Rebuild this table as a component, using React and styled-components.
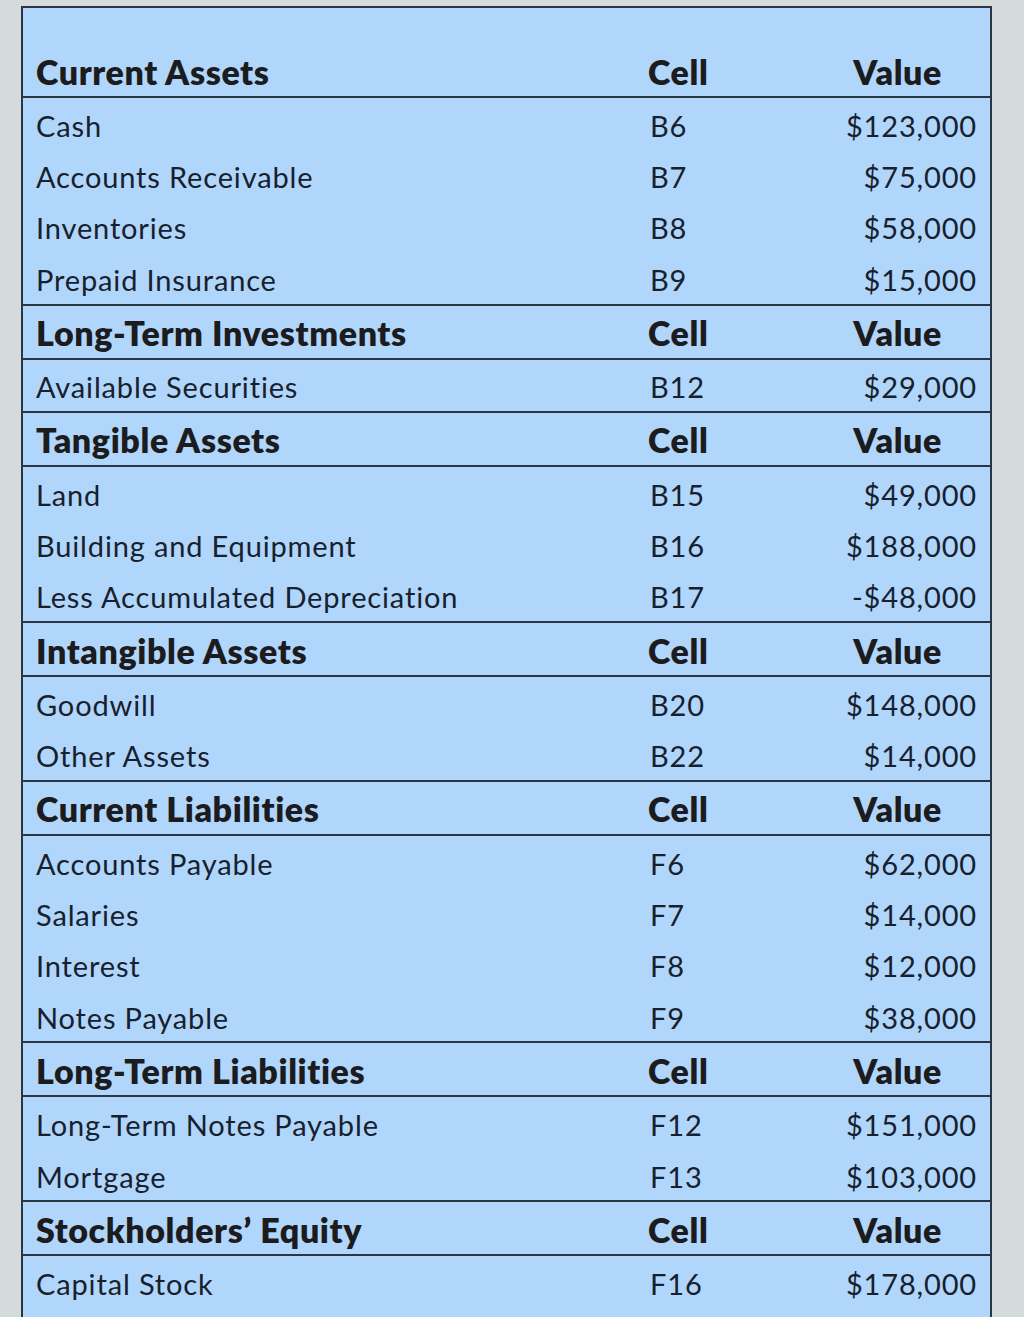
import React from "react";
import styled, { createGlobalStyle } from "styled-components";

const GlobalStyle = createGlobalStyle`
  html, body {
    margin: 0;
    padding: 0;
    background: #d5dbdb;
  }
  body {
    font-family: Lato, "Liberation Sans", sans-serif;
  }
  * {
    box-sizing: border-box;
  }
`;

const Page = styled.div`
  padding: 6px 0 0 21px;
  height: 1317px;
  overflow: hidden;
`;

const Sheet = styled.div`
  width: 971px;
  min-height: 1400px;
  background: #b1d6fb;
  border: 2px solid #2a3644;
  border-bottom: none;
`;

const HeadRow = styled.div`
  display: grid;
  grid-template-columns: 612px 1fr auto;
  align-items: center;
  padding: ${(p) => (p.$first ? "38px" : "2px")} 48px 0 13px;
  height: ${(p) => (p.$first ? "90px" : "56px")};
  border-top: ${(p) => (p.$first ? "none" : "2px solid #2a3644")};
  border-bottom: 2px solid #2a3644;
  color: #1c1c1e;
  font-size: 34px;
  font-weight: 800;
  letter-spacing: 0.6px;
`;

const Row = styled.div`
  display: grid;
  grid-template-columns: 612px 1fr auto;
  align-items: center;
  padding: 3px 13px 0 13px;
  height: 51.4px;
  color: #17212d;
  font-size: 29px;
  font-weight: 400;
  letter-spacing: 0.85px;
`;

const Label = styled.span`
  white-space: nowrap;
`;

const Cell = styled.span`
  padding-left: 2px;
`;

const Value = styled.span`
  text-align: right;
`;

const sections = [
  {
    title: "Current Assets",
    rows: [
      ["Cash", "B6", "$123,000"],
      ["Accounts Receivable", "B7", "$75,000"],
      ["Inventories", "B8", "$58,000"],
      ["Prepaid Insurance", "B9", "$15,000"],
    ],
  },
  {
    title: "Long-Term Investments",
    rows: [["Available Securities", "B12", "$29,000"]],
  },
  {
    title: "Tangible Assets",
    rows: [
      ["Land", "B15", "$49,000"],
      ["Building and Equipment", "B16", "$188,000"],
      ["Less Accumulated Depreciation", "B17", "-$48,000"],
    ],
  },
  {
    title: "Intangible Assets",
    rows: [
      ["Goodwill", "B20", "$148,000"],
      ["Other Assets", "B22", "$14,000"],
    ],
  },
  {
    title: "Current Liabilities",
    rows: [
      ["Accounts Payable", "F6", "$62,000"],
      ["Salaries", "F7", "$14,000"],
      ["Interest", "F8", "$12,000"],
      ["Notes Payable", "F9", "$38,000"],
    ],
  },
  {
    title: "Long-Term Liabilities",
    rows: [
      ["Long-Term Notes Payable", "F12", "$151,000"],
      ["Mortgage", "F13", "$103,000"],
    ],
  },
  {
    title: "Stockholders’ Equity",
    rows: [["Capital Stock", "F16", "$178,000"]],
  },
];

export default function App() {
  return (
    <>
      <GlobalStyle />
      <Page>
        <Sheet>
          {sections.map((s, i) => (
            <React.Fragment key={s.title}>
              <HeadRow $first={i === 0}>
                <Label>{s.title}</Label>
                <span>Cell</span>
                <Value>Value</Value>
              </HeadRow>
              {s.rows.map(([label, cell, value]) => (
                <Row key={label}>
                  <Label>{label}</Label>
                  <Cell>{cell}</Cell>
                  <Value>{value}</Value>
                </Row>
              ))}
            </React.Fragment>
          ))}
        </Sheet>
      </Page>
    </>
  );
}
